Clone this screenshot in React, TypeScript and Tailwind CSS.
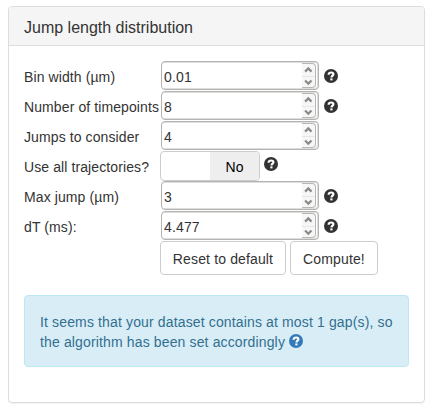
import type { ReactNode } from "react";

function HelpIcon({ className = "" }: { className?: string }) {
  return (
    <svg viewBox="0 0 14 14" className={`h-[14px] w-[14px] shrink-0 ${className}`} aria-label="Help">
      <circle cx="7" cy="7" r="7" fill="currentColor" />
      <path d="M4.6 5.7C4.6 4.1 5.5 3.5 7.1 3.5c1.5 0 2.3.7 2.3 1.7 0 1.4-1.9 1.5-1.9 3.2" fill="none" stroke="white" strokeWidth="2.1" />
      <rect x="6.3" y="9.4" width="2.2" height="2" fill="white" />
    </svg>
  );
}

function NumberField({ value }: { value: string }) {
  return (
    <div className="ml-px flex h-[29px] w-[158px] justify-between rounded-[4px] border border-[#b3b3b1] bg-white pl-[2px] shadow-[inset_-1px_-1px_0_#dededd,inset_0_1px_0_#dededd]">
      <span className="pt-[5px] leading-5 tracking-[0.15px]">{value}</span>
      <div className="mt-px mr-[2px] flex h-[25px] w-[14px] flex-col rounded-r-[4px] border border-l-0 border-[#b7b7b5] bg-[#f7f7f7] text-[#8a8a87]">
        <svg viewBox="0 0 13 12" className="h-[12px] w-[13px]">
          <path d="M3.1 7.6 6.3 4.4 9.5 7.6" fill="none" stroke="currentColor" strokeWidth="2.3" />
        </svg>
        <svg viewBox="0 0 13 10" className="h-[11px] w-[13px] border-t border-[#e7e7e7]">
          <path d="M3.1 3.5 6.3 6.7 9.5 3.5" fill="none" stroke="currentColor" strokeWidth="2.3" />
        </svg>
      </div>
    </div>
  );
}

function Row({ label, children }: { label: string; children: ReactNode }) {
  return (
    <div className="flex h-[30px]">
      <div className="w-[136px] shrink-0 pt-[6px] leading-5 tracking-[0.1px] whitespace-nowrap">{label}</div>
      {children}
    </div>
  );
}

function NumberRow({ label, value, help = true }: { label: string; value: string; help?: boolean }) {
  return (
    <Row label={label}>
      <NumberField value={value} />
      {help && <HelpIcon className="mt-[8px] ml-[5px]" />}
    </Row>
  );
}

export default function App() {
  return (
    <main className="h-[408px] w-[431px] bg-white pt-[6px] pl-[8px] font-['Liberation_Sans',Arial,sans-serif] text-[14px] leading-5 tracking-[0.14px] text-[#333333]">
      <section className="h-[397px] w-[417px] rounded-[4px] border border-[#dddddd] bg-white shadow-[0_1px_1px_rgba(0,0,0,0.05)]">
        <h3 className="h-[39px] rounded-t-[3px] border-b border-[#dddddd] bg-[#f5f5f5] px-[15px] pt-[11px] text-[16px] leading-[20px] tracking-normal">
          Jump length distribution
        </h3>
        <div className="p-[15px]">
          <NumberRow label="Bin width (µm)" value="0.01" />
          <NumberRow label="Number of timepoints" value="8" />
          <NumberRow label="Jumps to consider" value="4" help={false} />
          <Row label="Use all trajectories?">
            <div className="flex h-[30px] w-[100px] overflow-hidden rounded-[4px] border border-[#cccccc]">
              <span className="w-[49px]" />
              <span className="flex-1 bg-[#eeeeee] pt-[5px] text-center text-black">No</span>
            </div>
            <HelpIcon className="mt-[6px] ml-[4px]" />
          </Row>
          <NumberRow label="Max jump (µm)" value="3" />
          <NumberRow label="dT (ms):" value="4.477" />
          <div className="flex gap-[4px] pl-[136px]">
            <button className="h-[34px] w-[126px] rounded-[4px] border border-[#cccccc] bg-white pt-[2px] whitespace-nowrap">Reset to default</button>
            <button className="h-[34px] w-[88px] rounded-[4px] border border-[#cccccc] bg-white pt-[2px]">Compute!</button>
          </div>
          <div className="mt-[20px] h-[72px] w-[385px] rounded-[4px] border border-[#bce8f1] bg-[#d9edf7] px-[15px] pt-[16px] whitespace-nowrap text-[#31708f]">
            <p>It seems that your dataset contains at most 1 gap(s), so</p>
            <p className="flex gap-[4px]">
              <span>the algorithm has been set accordingly</span>
              <HelpIcon className="mt-[2px] text-[#337ab7]" />
            </p>
          </div>
        </div>
      </section>
    </main>
  );
}
